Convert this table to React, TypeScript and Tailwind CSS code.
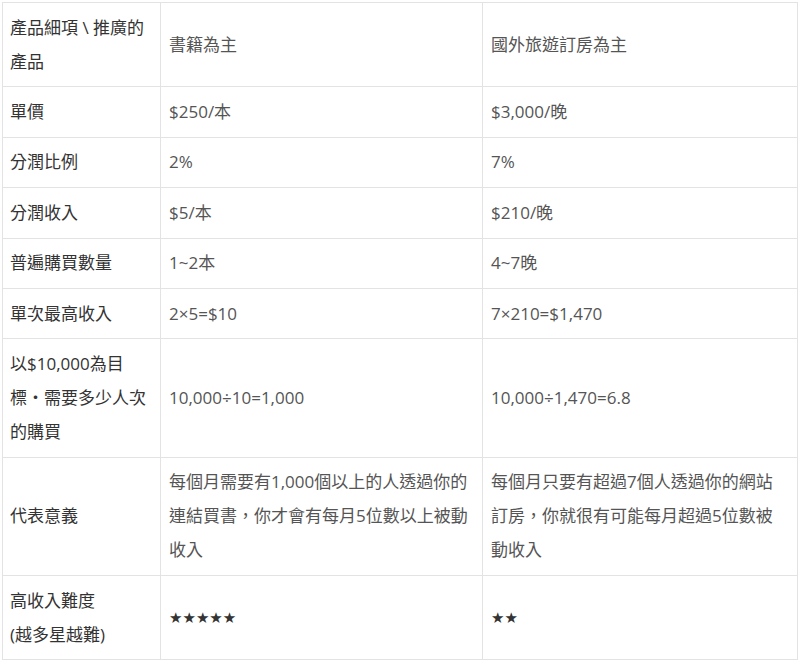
const rows: { label: React.ReactNode; a: React.ReactNode; b: React.ReactNode }[] = [
  {
    label: (
      <>
        產品細項 \ 推廣的
        <br />
        產品
      </>
    ),
    a: "書籍為主",
    b: "國外旅遊訂房為主",
  },
  { label: "單價", a: "$250/本", b: "$3,000/晚" },
  { label: "分潤比例", a: "2%", b: "7%" },
  { label: "分潤收入", a: "$5/本", b: "$210/晚" },
  { label: "普遍購買數量", a: "1~2本", b: "4~7晚" },
  { label: "單次最高收入", a: "2×5=$10", b: "7×210=$1,470" },
  {
    label: (
      <>
        以$10,000為目
        <br />
        標・需要多少人次
        <br />
        的購買
      </>
    ),
    a: "10,000÷10=1,000",
    b: "10,000÷1,470=6.8",
  },
  {
    label: "代表意義",
    a: (
      <>
        每個月需要有1,000個以上的人透過你的
        <br />
        連結買書，你才會有每月5位數以上被動
        <br />
        收入
      </>
    ),
    b: (
      <>
        每個月只要有超過7個人透過你的網站
        <br />
        訂房，你就很有可能每月超過5位數被
        <br />
        動收入
      </>
    ),
  },
  {
    label: (
      <>
        高收入難度
        <br />
        (越多星越難)
      </>
    ),
    a: <span className="font-['DejaVu_Sans',sans-serif] text-[15px] text-[#333]">★★★★★</span>,
    b: <span className="font-['DejaVu_Sans',sans-serif] text-[15px] text-[#333]">★★</span>,
  },
];

export default function App() {
  return (
    <div className="min-h-screen bg-white p-[2px] font-['Open_Sans','Noto_Sans_CJK_TC',sans-serif] text-[17px] leading-[34px]">
      <table className="w-[795px] table-fixed border-collapse border border-[#e3e3e3]">
        <colgroup>
          <col className="w-[158px]" />
          <col className="w-[322px]" />
          <col className="w-[315px]" />
        </colgroup>
        <tbody>
          {rows.map((r, i) => (
            <tr key={i}>
              <td className="border border-[#e3e3e3] px-[7px] py-[7.7px] align-middle whitespace-nowrap text-[#333]">
                {r.label}
              </td>
              <td className="border border-[#e3e3e3] px-[8px] py-[7.7px] align-middle whitespace-nowrap text-[#555]">
                {r.a}
              </td>
              <td className="border border-[#e3e3e3] px-[8px] py-[7.7px] align-middle whitespace-nowrap text-[#555]">
                {r.b}
              </td>
            </tr>
          ))}
        </tbody>
      </table>
    </div>
  );
}
